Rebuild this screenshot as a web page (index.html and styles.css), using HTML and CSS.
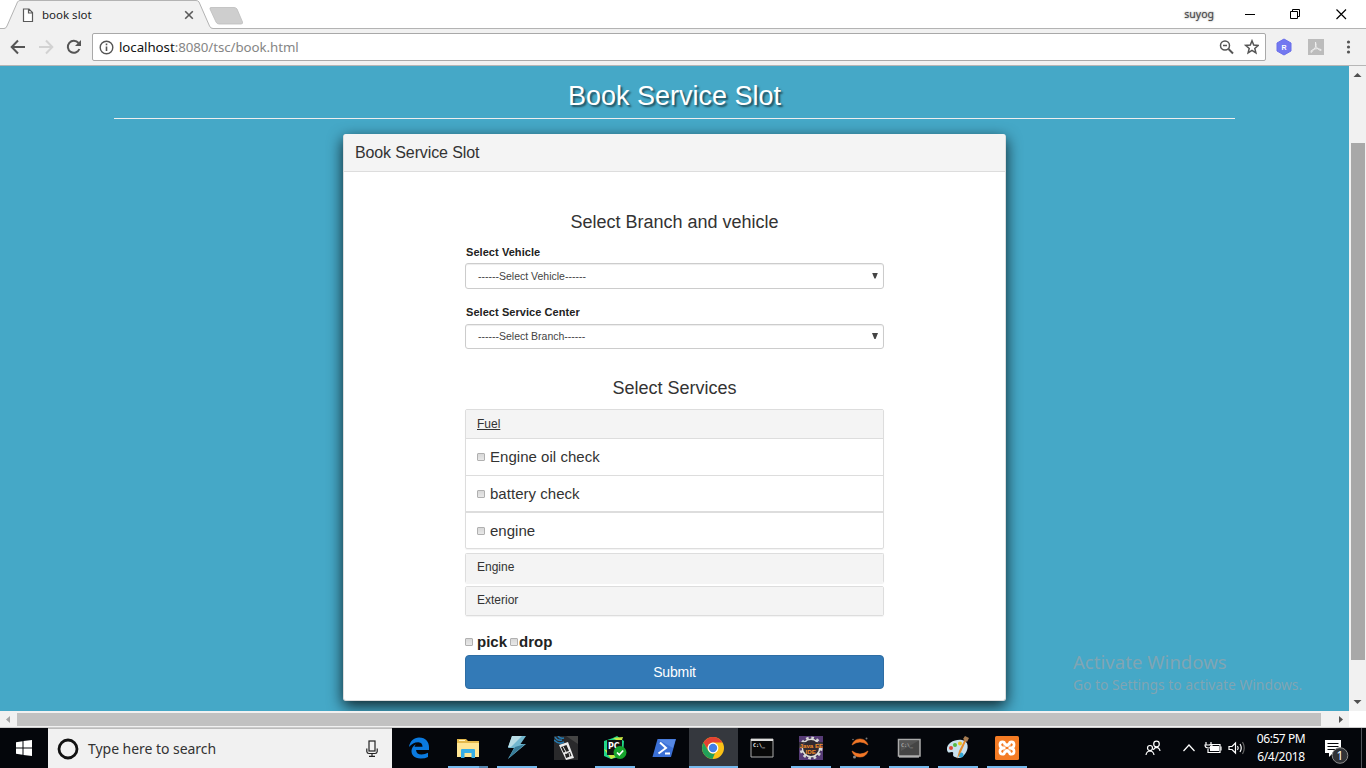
FILE: index.html
```html
<!DOCTYPE html>
<html lang="en">
<head>
<meta charset="utf-8">
<title>book slot</title>
<link rel="stylesheet" href="styles.css">
</head>
<body>
<div class="desktop">
  <header class="tabstrip">
    <svg class="tab-shape" width="250" height="29" viewBox="0 0 250 29">
      <path d="M0 28.500H4Q6 28.500 7 26L17.500 2Q18.500 .5 20 .5H196Q198 .5 199 2L209.500 26Q210.500 28.500 213 28.500H250V30H0Z" fill="#f1f1f1" stroke="#b3b3b3"/>
      <path d="M211 7.500H234Q236 7.500 237 9L242.500 22Q243 24 241 24H219Q217 24 216 22L210 9Q209.500 7.500 211 7.500Z" fill="#cecece" stroke="#bcbcbc" stroke-width=".8"/>
    </svg>
    <svg class="doc-icon" width="12" height="15" viewBox="0 0 12 15"><path d="M1.500 1H7L10.500 4.500V13.500H1.500ZM6.500 1V5H10.500" fill="#fff" stroke="#5a5a5a" stroke-width="1.200"/></svg>
    <span class="tab-title">book slot</span>
    <svg class="tab-close" width="10" height="10" viewBox="0 0 10 10"><path d="M1.200 1.200L8.800 8.800M8.800 1.200L1.200 8.800" stroke="#5a5a5a" stroke-width="1.600"/></svg>
    <span class="user">suyog</span>
    <svg class="win-controls" width="110" height="20" viewBox="0 0 110 20" fill="none" stroke="#000">
      <path d="M5 10.500H15"/><path d="M50.500 10.500H57.500V17.500H50.500ZM52.500 10V8.500H59.500V15.500H58" transform="translate(0 -3)"/><path d="M96.500 5.500L106 15M106 5.500L96.500 15" stroke-width="1.200"/>
    </svg>
  </header>
  <div class="toolbar">
    <svg class="nav-icons" width="92" height="36" viewBox="0 0 92 36" fill="none" stroke="#555" stroke-width="2">
      <path d="M25 18H12M18 11.500L11.700 18L18 24.500"/>
      <path d="M39 18H52M46 11.500L52.300 18L46 24.500" stroke="#d2d2d2"/>
      <path d="M78.500 14A6 6 0 1 0 79.400 20"/><path d="M81 11V17H75Z" fill="#555" stroke="none"/>
    </svg>
    <div class="address">
      <svg width="15" height="15" viewBox="0 0 15 15"><circle cx="7.500" cy="7.500" r="6.300" fill="none" stroke="#555" stroke-width="1.400"/><path d="M7.500 6.500V11M7.500 3.500V5.200" stroke="#555" stroke-width="1.600"/></svg>
      <span class="url"><b>localhost</b>:8080/tsc/book.html</span>
      <svg width="40" height="16" viewBox="0 0 40 16" fill="none" stroke="#555" stroke-width="1.500"><circle cx="6" cy="6.500" r="4.500"/><path d="M9.500 10L14 14.500" stroke-width="2"/><path d="M4 6.500H8"/><path d="M33 1.800L34.700 6.100L39.300 6.400L35.800 9.400L36.900 13.900L33 11.400L29.100 13.900L30.200 9.400L26.700 6.400L31.300 6.100Z"/></svg>
    </div>
    <svg class="ext-icons" width="100" height="36" viewBox="0 0 100 36">
      <path d="M18 10L25 14V22L18 26L11 22V14Z" fill="#7378f0" stroke="#696eea" stroke-linejoin="round"/>
      <text x="15.500" y="21" class="ext-letter">R</text>
      <rect x="42" y="10" width="16" height="16" fill="#bcbcbc"/>
      <path d="M49.500 13Q51 16 49 19Q47 22 45 23.500Q44 21.500 48 20Q52 19 55 20.500Q56 22.500 52.500 20.500Q48 17 49.500 13Z" fill="none" stroke="#eee"/>
      <g fill="#555"><circle cx="82.500" cy="13" r="1.600"/><circle cx="82.500" cy="18" r="1.600"/><circle cx="82.500" cy="23" r="1.600"/></g>
    </svg>
  </div>

  <div class="viewport">
    <main class="page">
      <h1>Book Service Slot</h1>
      <section class="card">
        <h2 class="card-head">Book Service Slot</h2>
        <form class="form">
          <h3 class="title-branch">Select Branch and vehicle</h3>
          <label class="field-label label-vehicle">Select Vehicle</label>
          <div class="select select-vehicle"><span>------Select Vehicle------</span><i class="caret"></i></div>
          <label class="field-label label-center">Select Service Center</label>
          <div class="select select-branch"><span>------Select Branch------</span><i class="caret"></i></div>
          <h3 class="title-services">Select Services</h3>
          <div class="panel open">
            <div class="panel-head"><u>Fuel</u></div>
            <div class="item"><i class="check"></i><span>Engine oil check</span></div>
            <div class="item"><i class="check"></i><span>battery check</span></div>
            <div class="item last"><i class="check"></i><span>engine</span></div>
          </div>
          <div class="panel faint"><div class="panel-head">Engine</div></div>
          <div class="panel"><div class="panel-head">Exterior</div></div>
          <div class="pickup"><i class="check"></i><span class="pick">pick</span><i class="check"></i><span class="drop">drop</span></div>
          <div class="submit">Submit</div>
        </form>
      </section>
      <div class="activate"><div class="activate-title">Activate Windows</div><div class="activate-sub">Go to Settings to activate Windows.</div></div>
    </main>
    <div class="vscroll">
      <svg width="17" height="17"><path d="M4.500 11L8.500 7L12.500 11Z" fill="#505050"/></svg>
      <div class="vthumb"></div>
      <svg width="17" height="17"><path d="M4.500 6L8.500 10L12.500 6Z" fill="#505050"/></svg>
    </div>
  </div>
  <div class="hscroll">
    <svg width="17" height="17"><path d="M10 5V12L6 8.500Z" fill="#a3a3a3"/></svg>
    <div class="hthumb"></div>
    <svg class="hright" width="17" height="17"><path d="M7 5V12L11 8.500Z" fill="#505050"/></svg>
    <div class="corner"></div>
  </div>

  <footer class="taskbar">
    <div class="start"><svg width="16" height="16" viewBox="0 0 16 16" fill="#fff"><path d="M0 2.200L6.500 1.200V7.400H0ZM7.500 1L16 0V7.400H7.500ZM0 8.400H6.500V14.800L0 13.800ZM7.500 8.400H16V16L7.500 15Z"/></svg></div>
    <div class="search">
      <svg width="24" height="24" viewBox="0 0 24 24"><circle cx="12" cy="12" r="9" fill="none" stroke="#111" stroke-width="2.800"/></svg>
      <span>Type here to search</span>
      <svg class="mic" width="12" height="18" viewBox="0 0 12 18" fill="none" stroke="#222" stroke-width="1.200"><rect x="3" y="1" width="6" height="10"/><path d="M.8 8.500V11.500Q1 13.500 3 13.500H9Q11 13.500 11.200 11.500V8.500M6 13.500V16M3 16.400H9"/></svg>
    </div>
    <div class="apps">
      <div class="app"><svg viewBox="0 0 24 24"><path d="M2 11C3 5 7 1.500 12 1.500C19 1.500 22 6.500 22 11V14H9Q9.500 18.500 14.500 18.500Q18 18.500 21 16.800V21Q18 22.600 13.500 22.500C7 22.500 4.200 18.500 4.500 14.500Q4.800 10.500 9 8.200Q7.800 9.500 7.500 10.800H15.500Q15.500 6.500 11.500 6.200Q6 6 2 11Z" fill="#0a7ae0"/></svg></div>
      <div class="app running explorer"><svg viewBox="0 0 24 24"><path d="M1 3H10L12 5H23V21H1Z" fill="#e4b94d"/><path d="M1 7H23V21H1Z" fill="#ffe594"/><path d="M3 4.500H9" stroke="#fff5c0"/><path d="M5 22V14Q5 13 6 13H18Q19 13 19 14V22H15.500V17H8.500V22Z" fill="#35ade6"/></svg></div>
      <div class="app running"><svg viewBox="0 0 24 24"><path d="M7 0H21L15.500 8H21L3 23L9 12H3Z" fill="#72b7cf"/><path d="M7 0H17L6 11H3Z" fill="#b8dce5"/><path d="M10 11L20 8L3 23Z" fill="#387c99"/></svg></div>
      <div class="app"><svg viewBox="0 0 24 24"><path d="M0 0H24V24H0Z" fill="#29292b"/><path d="M12 0H24V8Z" fill="#444"/><g fill="none" stroke="#267cb3" stroke-width="1.500"><path d="M1 1Q3 5 8 4M0 4Q5 9 10 6M4 0Q6 3 10 2"/></g><path d="M5 9L14 6L20 22L12 24Z" fill="#eee"/><path d="M7 11L12.500 9L15 15L9.500 16.500ZM11 18L16 16L17.500 20L12 22Z" fill="#222"/><path d="M9 10.500L13 18M15 17L16 21" stroke="#ddd"/></svg></div>
      <div class="app running"><svg viewBox="0 0 24 24"><path d="M1 5L10 2L14 0L21 5L20 20L8 23L1 20Z" fill="#21d789"/><path d="M10 2L20 1L18 7ZM1 13L8 23L15 20Z" fill="#c9e845"/><path d="M4 4H19V19H4Z" fill="#111"/><text x="5" y="12.500" class="pc">PC</text><circle cx="17" cy="16.500" r="6.500" fill="#16a32c"/><path d="M14 16.500L16.300 18.800L20.200 14.500" fill="none" stroke="#fff" stroke-width="1.700"/></svg></div>
      <div class="app"><svg viewBox="0 0 24 24"><path d="M5.500 3H24L19 21H.5Z" fill="#3b70d6"/><path d="M6 3.500H23.500L21 12Z" fill="#5688e4"/><path d="M8 6.500L14 12L6.500 17.500M13 17.500H18" fill="none" stroke="#fff" stroke-width="2"/></svg></div>
      <div class="app active"><svg viewBox="0 0 24 24"><circle cx="12" cy="12" r="11" fill="#fbc116"/><path d="M2.500 6.500A11 11 0 0 1 21.500 6.500H12A5.500 5.500 0 0 0 7.200 14.700Z" fill="#e34133"/><path d="M2.500 6.500L7.200 14.700A5.500 5.500 0 0 0 14 17.200L11.500 23A11 11 0 0 1 2.500 6.500Z" fill="#22a05a"/><circle cx="12" cy="12" r="5.400" fill="#fff"/><circle cx="12" cy="12" r="4.200" fill="#427fe7"/></svg></div>
      <div class="app"><svg viewBox="0 0 24 24"><path d="M1 3H23V21H1Z" fill="#080808" stroke="#aaa"/><path d="M1 3H23V5H1Z" fill="#ddd"/><text x="3" y="11" class="prompt">C:\_</text></svg></div>
      <div class="app running"><svg viewBox="0 0 24 24"><path d="M0 0H24V24H0Z" fill="#563b76"/><circle cx="12" cy="12" r="10" fill="#302a31" stroke="#d6d6d6" stroke-width="3" stroke-dasharray="2.600 2.636"/><circle cx="12" cy="12" r="8.700" fill="#302a31" stroke="#ddd" stroke-width="1.500"/><path d="M0 6H24V12H0Z" fill="#302a31" opacity=".85"/><text x="0.500" y="11.500" class="java">Java EE</text><text x="6.500" y="18" class="java">IDE</text></svg></div>
      <div class="app running"><svg viewBox="0 0 24 24"><path d="M4 9Q6 3 12 3Q18 3 20 9Q12 3 4 9ZM4 15Q6 21 12 21Q18 21 20 15Q12 21 4 15Z" fill="#f37727" stroke="#f37727" stroke-width=".6"/><circle cx="18.500" cy="2.500" r="1" fill="#777"/><circle cx="6.500" cy="21" r="1.500" fill="#888"/><circle cx="5" cy="3.500" r=".8" fill="#777"/></svg></div>
      <div class="app running"><svg viewBox="0 0 24 24"><path d="M1.500 3.500H23V20H1.500Z" fill="#454545" stroke="#aaa" stroke-width="1.500"/><path d="M3 5H21L4 15Z" fill="#555"/><text x="4" y="11" class="prompt dim">C:\_</text><path d="M2 21H22" stroke="#ddd"/></svg></div>
      <div class="app running"><svg viewBox="0 0 24 24"><path d="M1 14C0 7 9 3 16 4C23 5 23 13 19 18C16 22 13 23 9 21C5 20 9 16 6 16C4 16 2 18 1 14Z" fill="#c9e2ef"/><circle cx="5" cy="12" r="2" fill="#df4938"/><circle cx="9" cy="9" r="2" fill="#55b844"/><circle cx="14" cy="7.500" r="2" fill="#f0c321"/><circle cx="15" cy="19" r="2.500" fill="#33a6d6"/><path d="M20.500 4L15 16L11 23L13 15L19 3Z" fill="#e38a2d"/><path d="M17 3L19 0L23 2L21 6Z" fill="#a77d53"/></svg></div>
      <div class="app running"><svg viewBox="0 0 24 24"><rect width="24" height="24" rx="1.500" fill="#f47b24"/><path d="M9.500 9.500V7.500Q9.500 5.800 7.500 5.800Q5 5.800 5 8.700Q5 12 9 12H15Q19 12 19 8.700Q19 5.800 16.500 5.800Q14.500 5.800 14.500 7.500V9.500M9.500 14.500V16.500Q9.500 18.200 7.500 18.200Q5 18.200 5 15.300Q5 12 9 12H15Q19 12 19 15.300Q19 18.200 16.500 18.200Q14.500 18.200 14.500 16.500V14.500M9.500 7.500Q12 10.500 14.500 7.500M9.500 16.500Q12 13.500 14.500 16.500" fill="none" stroke="#fff" stroke-width="2.800" stroke-linejoin="round"/><path d="M7.500 8V9.500M16.500 8V9.500M7.500 14.500V16M16.500 14.500V16M10.500 12H13.500" stroke="#f47b24" stroke-width="1.800"/></svg></div>
    </div>
    <svg class="tray" width="110" height="40" viewBox="0 0 110 40" fill="none" stroke="#fff" stroke-width="1.200">
      <circle cx="16.500" cy="16" r="2.800"/><path d="M13.500 22Q14 19.500 16.500 19.300Q19.500 19.500 20 23"/><circle cx="10" cy="20" r="2.500"/><path d="M6 27Q6.500 23.200 10 23Q13.500 23.200 14 27"/>
      <path d="M43.500 23L49 17L54.500 23"/><path d="M69.500 16.500H80V24.500H68V21"/><path d="M70 18H79V23H70Z" fill="#fff" stroke="none"/><path d="M81 18.500V22.500M66 14V17H71V14M65 17H72Q72 20 68.500 20Q65 20 65 17Z"/>
      <path d="M89 18.500H92L95.500 15V25L92 21.500H89ZM97.500 18Q99 20 97.500 22M100 16Q102.500 20 100 24"/><path d="M102.500 14Q106 20 102.500 26" stroke="#666"/>
    </svg>
    <div class="clock"><span>06:57 PM</span><span class="date">6/4/2018</span></div>
    <div class="notify">
      <svg width="26" height="28" viewBox="0 0 26 28"><path d="M1 1H17V14H9L5 18V14H1Z" fill="#fff"/><path d="M3.500 4.500H14.500M3.500 7.500H14.500M3.500 10.500H11" stroke="#05060a" stroke-width="1.200"/><circle cx="16" cy="16.500" r="7.800" fill="#303236" stroke="#8c8c8c"/><text x="12.500" y="21" class="badge">1</text></svg>
    </div>
    <div class="peek"></div>
  </footer>
</div>
</body>
</html>
```
FILE: styles.css
```css
* { box-sizing: border-box; }
body { margin: 0; overflow: hidden; font-family: "Liberation Sans", Arial, sans-serif; }
svg { display: block; flex: none; }
h1, h2, h3 { margin: 0; font-weight: 400; }
.desktop { width: 1366px; height: 768px; display: flex; flex-direction: column; background: #fff; }

/* Browser chrome */
.tabstrip { position: relative; height: 29px; flex: none; display: flex; align-items: center; border-bottom: 1px solid #b3b3b3; font-family: "Noto Sans", sans-serif; }
.tab-shape { position: absolute; left: 0; top: 0; }
.doc-icon { position: relative; margin-left: 22px; margin-top: 2px; }
.tab-title { position: relative; margin-left: 8px; width: 142px; font-size: 11.5px; color: #222; }
.tab-close { position: relative; margin-top: 2px; }
.user { margin-left: auto; margin-right: 26px; font-size: 10.5px; color: #444; letter-spacing: 0; text-shadow: 0 0 2px #777; }
.win-controls { margin-right: 16px; margin-top: -1px; }
.toolbar { height: 37px; flex: none; display: flex; align-items: center; background: #f1f1f1; border-bottom: 1px solid #b6b6b6; }
.address { width: 1174px; height: 28px; display: flex; align-items: center; padding: 0 6px; background: #fff; border: 1px solid #a9a9a9; border-radius: 2px; }
.url { flex: 1; margin-left: 5px; font: 13.3px "Noto Sans", sans-serif; letter-spacing: -.06px; color: #858585; }
.url b { font-weight: 400; color: #111; }
.ext-letter { font: bold 7px "Liberation Sans", sans-serif; fill: #fff; }

/* Page */
.viewport { height: 645px; flex: none; display: flex; }
.page { position: relative; width: 1349px; overflow: hidden; background: #45a8c7; display: flex; flex-direction: column; align-items: center; }
h1 { width: 1121px; height: 53px; flex: none; padding-top: 15px; font-size: 27px; line-height: 31px; text-align: center; color: #fff; border-bottom: 1px solid #eee; text-shadow: 2px 2px 2px rgba(0,0,0,.55); }
.card { width: 663px; height: 567px; flex: none; margin-top: 15px; background: #fff; border: 1px solid #ddd; border-top-color: #f4f4f4; border-radius: 3px; box-shadow: 0 5px 15px rgba(0,0,0,.8); }
.card-head { height: 37px; padding-left: 11px; background: #f4f4f4; border-bottom: 1px solid #ddd; font-size: 16px; line-height: 35px; letter-spacing: -.12px; color: #333; }
.form { width: 419px; margin: 0 auto; padding-top: 40px; color: #333; }
h3 { font-size: 18px; line-height: 20px; text-align: center; }
.title-branch { height: 32px; }
.field-label { display: block; height: 19px; padding-left: 1px; font-size: 11px; font-weight: 700; line-height: 16px; letter-spacing: .06px; color: #222; }
.label-center { margin-top: 15px; height: 20px; }
.select { display: flex; align-items: center; justify-content: space-between; padding: 0 5px 0 12px; border: 1px solid #ccc; border-radius: 3px; box-shadow: inset 0 1px 1px rgba(0,0,0,.075); font-size: 10.5px; color: #444; }
.select-vehicle { height: 26px; }
.select-branch { height: 25px; }
.select-branch span { margin-bottom: 1px; }
.caret { width: 6px; height: 6px; margin-bottom: 1px; background: #444; clip-path: polygon(0 0, 100% 0, 60% 100%, 40% 100%); }
.title-services { margin-top: 29px; margin-bottom: 11px; }
.panel { height: 30px; margin-bottom: 3px; border: 1px solid #ddd; border-radius: 2px; box-shadow: 0 1px 1px rgba(0,0,0,.05); overflow: hidden; }
.panel.open { height: 140px; margin-bottom: 4px; }
.panel.faint { border-bottom-color: #f4f4f4; }
.panel-head { height: 28px; padding-left: 11px; background: #f4f4f4; font-size: 12px; line-height: 27px; }
.open .panel-head { line-height: 28px; }
.item { height: 37px; display: flex; align-items: center; padding-left: 11px; gap: 5px; border-top: 1px solid #ddd; font-size: 15px; }
.item span { margin-bottom: 2px; letter-spacing: .03px; }
.item.last { margin-top: -1px; border-top-width: 2px; }
.item.last span { margin-bottom: 0; }
.check { width: 8px; height: 8px; flex: none; border: 1px solid #b0b0b0; border-radius: 1px; background: linear-gradient(#d8d8d8, #e8e8e8); }
.pickup { height: 27px; display: flex; align-items: center; margin-top: 12px; font-size: 15px; font-weight: 700; color: #222; }
.pick { margin: 0 3px 0 4px; }
.drop { margin-left: 1px; }
.submit { height: 34px; line-height: 32px; border: 1px solid #2e6da4; border-radius: 4px; background: #337ab7; color: #fff; text-align: center; font-size: 14px; letter-spacing: -.15px; }
.activate { position: absolute; left: 1073px; top: 582px; font-family: "Noto Sans", sans-serif; color: #80a5b3; white-space: nowrap; }
.activate-title { font-size: 18.5px; line-height: 28px; letter-spacing: .05px; }
.activate-sub { font-size: 13.8px; line-height: 18px; letter-spacing: .02px; }
.vscroll { width: 17px; background: #f1f1f1; }
.vthumb { height: 517px; margin: 60px 1px 34px 2px; background: #a8a8a8; }
.hscroll { height: 17px; flex: none; display: flex; align-items: center; background: #f1f1f1; border-bottom: 1px solid #ccc; }
.hthumb { width: 1304px; height: 13px; background: #c1c1c1; }
.hright { margin-left: 11px; }
.corner { width: 17px; height: 16px; background: #fff; }

/* Taskbar */
.taskbar { height: 40px; flex: none; display: flex; align-items: stretch; background: #04060b; color: #fff; font-family: "Noto Sans", sans-serif; }
.start { width: 48px; display: grid; place-items: center; }
.search { width: 344px; display: flex; align-items: center; padding: 0 14px 0 8px; background: #f1f1f1; border-top: 1px solid #bbb; color: #333; font-size: 14px; }
.search span { margin-left: 8px; letter-spacing: -.04px; }
.mic { margin-left: auto; }
.apps { display: flex; margin-left: 3px; }
.app { width: 49px; padding: 8px 12px 0 11.5px; }
.app svg { width: 24px; height: 24px; }
.running, .active { background: linear-gradient(#76b9ed, #76b9ed) 4px 38px / 40px 2px no-repeat; }
.explorer { background: linear-gradient(90deg, #76b9ed 31px, #5587b0 31px) 4px 38px / 40px 2px no-repeat; }
.active { background-color: #35383e; background-position: 0 38px; background-size: 49px 2px; }
.pc { font: bold 8px "DejaVu Sans", sans-serif; fill: #fff; }
.prompt { font: bold 5px "DejaVu Sans Mono", monospace; fill: #fff; }
.prompt.dim { fill: #aaa; }
.java { font: bold 6.200px "Liberation Sans", sans-serif; fill: #f28a28; }
.tray { margin-left: 108px; }
.clock { width: 62px; padding-top: 2px; display: flex; flex-direction: column; align-items: center; font-size: 12px; line-height: 18px; letter-spacing: -.45px; white-space: nowrap; }
.date { letter-spacing: -.3px; }
.notify { margin-left: 12px; padding-top: 11px; }
.badge { font: 12px "Noto Sans", sans-serif; fill: #fff; }
.peek { margin-left: auto; width: 5px; border-left: 1px solid #50535a; }
```
